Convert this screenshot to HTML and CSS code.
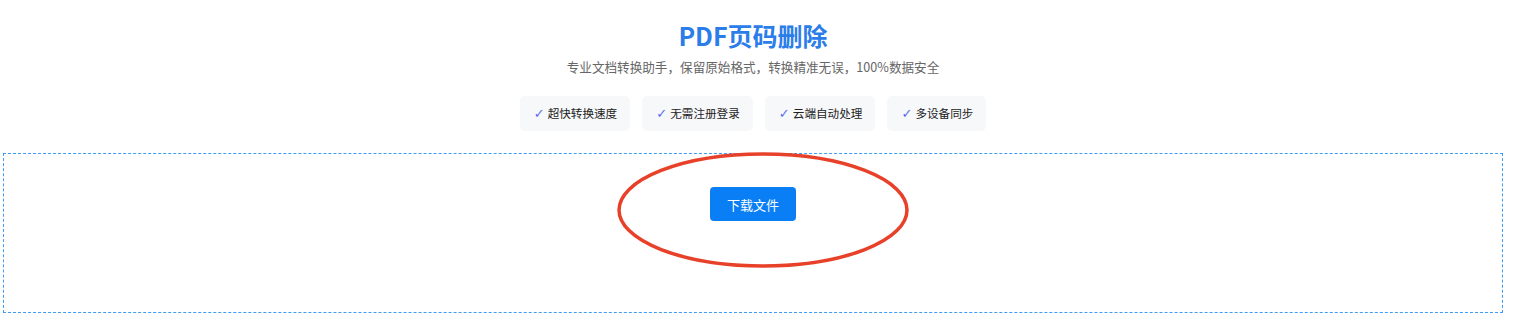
FILE: index.html
```html
<!DOCTYPE html>
<html>

<head>
    <meta charset="utf-8">
    <title>PDF页码删除</title>
    <link rel="stylesheet" href="styles.css">
</head>

<body>
    <div class="page">
        <h1 class="title">PDF页码删除</h1>
        <p class="subtitle">专业文档转换助手，保留原始格式，转换精准无误，100%数据安全</p>

        <ul class="features">
            <li><span class="check">✓</span>超快转换速度</li>
            <li><span class="check">✓</span>无需注册登录</li>
            <li><span class="check">✓</span>云端自动处理</li>
            <li><span class="check">✓</span>多设备同步</li>
        </ul>

        <div class="drop-box">
            <div class="action">
                <button class="download-btn">下载文件</button>
                <!-- 标注圈 -->
                <svg class="mark" width="300" height="124" viewBox="0 0 300 124">
                    <ellipse cx="148" cy="59" rx="144" ry="56" fill="none" stroke="#e8412a" stroke-width="3.5" />
                </svg>
            </div>
        </div>
    </div>
</body>

</html>
```

FILE: styles.css
```css
html,
body {
    margin: 0;
    padding: 0;
    background: #fff;
}

body {
    font-family: "Noto Sans CJK SC", "Microsoft YaHei", sans-serif;
    color: #333;
}

.page {
    width: 1500px;
    margin-left: 3px;
    padding-top: 17px;
    text-align: center;
}

.title {
    margin: 0;
    font-size: 25px;
    line-height: 36px;
    font-weight: bold;
    color: #2b7de9;
}

.subtitle {
    margin: 4px 0 0;
    font-size: 12.6px;
    line-height: 20px;
    color: #666;
}

.features {
    display: flex;
    justify-content: center;
    gap: 12px;
    margin: 19px 0 0;
    padding: 0;
    list-style: none;
}

.features > li {
    height: 35px;
    line-height: 35px;
    padding: 0 13px 0 14px;
    border-radius: 5px;
    background: #f7f8fa;
    font-size: 11.6px;
    color: #222;
}

.check {
    display: inline-block;
    width: 14px;
    text-align: left;
    color: #5b6cf0;
    font-family: "DejaVu Sans", sans-serif;
    font-size: 13px;
}

.drop-box {
    box-sizing: border-box;
    height: 160px;
    margin-top: 22px;
    padding-top: 33px;
    border: 1px dashed #3d9cf5;
}

.action {
    position: relative;
    display: inline-block;
}

.download-btn {
    display: block;
    width: 86px;
    height: 34px;
    padding: 0;
    border: none;
    outline: none;
    border-radius: 4px;
    background: #0a7ff5;
    color: #fff;
    font-family: inherit;
    font-size: 13px;
    cursor: pointer;
}

.mark {
    position: absolute;
    left: -95px;
    top: -36px;
    pointer-events: none;
}
```
